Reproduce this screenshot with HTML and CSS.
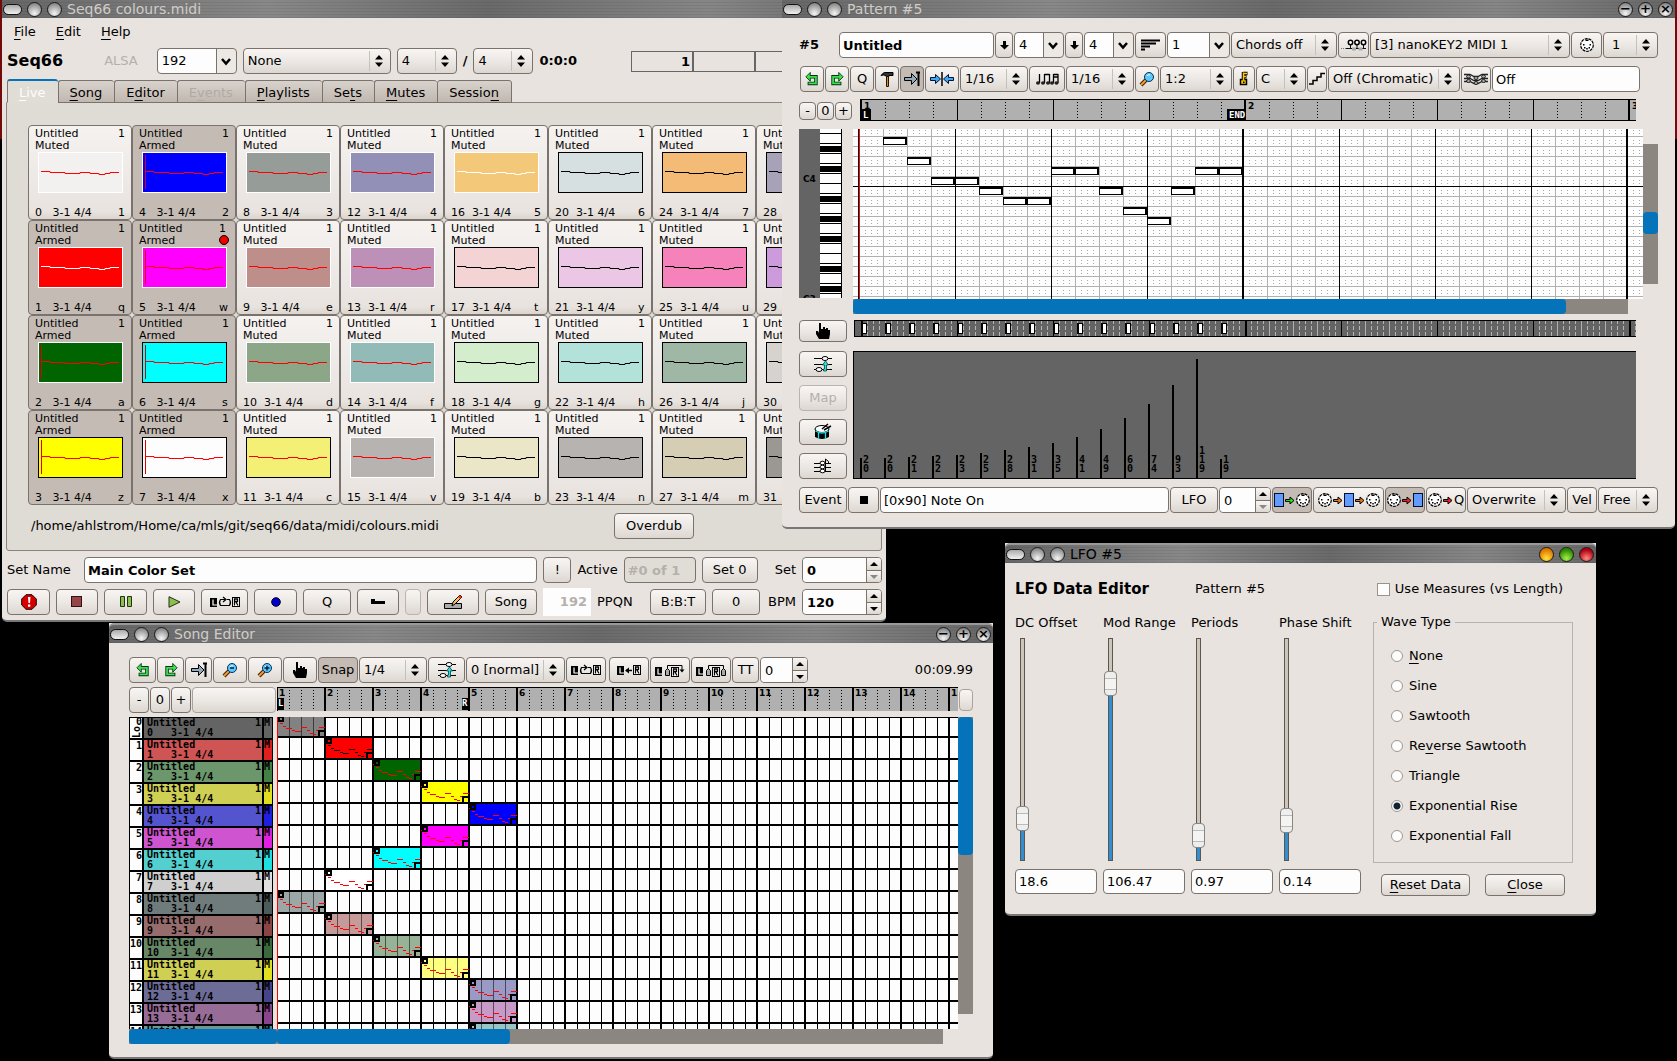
FILE: index.html
```html
<!DOCTYPE html>
<html lang="en">
<head>
<meta charset="utf-8">
<title>Seq66 colours.midi</title>
<link rel="stylesheet" href="styles.css">
</head>
<body>
<svg class="sprite" aria-hidden="true">
  <symbol id="i-undo" viewBox="0 0 16 16"><path d="M4 5.500h8.500v7.500H3" fill="none" stroke="#031" stroke-width="4"/><path d="M1 5.500l5-5v10z" fill="#3fe04f" stroke="#031"/><path d="M4 5.500h8.500v7.500H4" fill="none" stroke="#3fe04f" stroke-width="2"/></symbol>
  <symbol id="i-redo" viewBox="0 0 16 16"><path d="M12 5.500H3.500v7.500H13" fill="none" stroke="#031" stroke-width="4"/><path d="M15 5.500l-5-5v10z" fill="#3fe04f" stroke="#031"/><path d="M12 5.500H3.500v7.500H12" fill="none" stroke="#3fe04f" stroke-width="2"/></symbol>
  <symbol id="i-hammer" viewBox="0 0 16 16"><path d="M2 4.500q2-3 4-3h8v3h-4v1h-3v-1q-3-1-5 0z" fill="#333" stroke="#000"/><path d="M7.500 5.500h2v10h-2z" fill="#e08a30" stroke="#210"/></symbol>
  <symbol id="i-snap" viewBox="0 0 18 16"><path d="M1.500 6.500h7v-4l5.500 5.500-5.500 5.500v-4h-7z" fill="#8fa9bd" stroke="#000"/><path d="M13 1.500h4M15.500 1v14" fill="none" stroke="#000" stroke-width="2"/></symbol>
  <symbol id="i-squeeze" viewBox="0 0 24 16"><path d="M.5 6.500h5v-3l5 4.500-5 4.500v-3h-5zM23.500 6.500h-5v-3l-5 4.500 5 4.500v-3h5z" fill="#3fa9f5" stroke="#013" stroke-width="1"/><path d="M12 1v14" stroke="#000" stroke-width="1.500"/></symbol>
  <symbol id="i-notes" viewBox="0 0 24 14"><path d="M4.500 2v9M9.500 2v9M14.500 2v9M9.500 2.500h5M18.500 2v9M23 2v9M18.500 2.500h4.500M18.500 5h4.500" fill="none" stroke="#000" stroke-width="1.300"/><g fill="#222"><ellipse cx="3" cy="11" rx="2" ry="1.700"/><ellipse cx="8" cy="11" rx="2" ry="1.700"/><ellipse cx="13" cy="11" rx="2" ry="1.700"/><ellipse cx="17" cy="11" rx="2" ry="1.700"/><ellipse cx="21.500" cy="11" rx="2" ry="1.700"/></g></symbol>
  <symbol id="i-zoom" viewBox="0 0 16 16"><path d="M7 9l-5 5" stroke="#420" stroke-width="4"/><path d="M7 9l-5 5" stroke="#f19a38" stroke-width="2"/><circle cx="10" cy="6" r="4.500" fill="#5cc8ff" stroke="#035"/><path d="M8 5q1-2 3-1" stroke="#fff" fill="none"/></symbol>
  <symbol id="i-zoomout" viewBox="0 0 16 16"><use href="#i-zoom"/><path d="M8 6h4" stroke="#024" stroke-width="1.500"/></symbol>
  <symbol id="i-zoomin" viewBox="0 0 16 16"><use href="#i-zoom"/><path d="M7.500 6h5M10 3.500v5" stroke="#024" stroke-width="1.500"/></symbol>
  <symbol id="i-key" viewBox="0 0 10 16"><path d="M4 2.500h4.500M4 5.500h3.500M4.500 1v7.500" stroke="#000" stroke-width="3.500" fill="none"/><path d="M1.500 8.500h6v5h-6z" fill="#fc0" stroke="#000" stroke-width="1.500"/><path d="M4.500 1.500v8M4.500 2.500h3.500M4.500 5.500h2.500" stroke="#fc0" stroke-width="1.500" fill="none"/><rect x="4" y="10.500" width="1.500" height="1.500"/></symbol>
  <symbol id="i-scale" viewBox="0 0 18 14"><path d="M1 12h4v-3.500h4v-3.500h4v-3.500h4" fill="none" stroke="#000" stroke-width="1.500"/></symbol>
  <symbol id="i-chords" viewBox="0 0 24 14"><path d="M0 2.500h6l4 2h4l4-2h6M0 6.500h6l4 2h4l4-2h6M0 9.500h6l4 2h4l4-2h6" fill="none" stroke="#222" stroke-width="1.300"/><g fill="#aaa" stroke="#222"><ellipse cx="4.500" cy="4.500" rx="2" ry="1.500"/><ellipse cx="12" cy="6" rx="2" ry="1.500"/><ellipse cx="19.500" cy="4.500" rx="2" ry="1.500"/><ellipse cx="4.500" cy="9" rx="2" ry="1.500"/><ellipse cx="12" cy="11" rx="2" ry="1.500"/><ellipse cx="19.500" cy="9" rx="2" ry="1.500"/></g></symbol>
  <symbol id="i-sort" viewBox="0 0 20 12"><path d="M0 1.500h19M0 4.500h15M0 7.500h9M0 10.500h4" stroke="#000" stroke-width="2"/></symbol>
  <symbol id="i-port" viewBox="0 0 26 12"><path d="M0 9.500h6" stroke="#777" stroke-dasharray="1 1"/><path d="M5 9.500h20M9.500 5v5M16 5v5M22.500 5v5" stroke="#111"/><path d="M11 10h4M17.500 10h4" stroke="#aaa" stroke-width="3"/><g fill="#fff" stroke="#000" stroke-width="1.500"><circle cx="9.500" cy="3.500" r="2.200"/><circle cx="16" cy="3.500" r="2.200"/><circle cx="22.500" cy="3.500" r="2.200"/></g></symbol>
  <symbol id="i-din" viewBox="0 0 14 14"><circle cx="7" cy="7" r="6.300" fill="#fff" stroke="#000" stroke-dasharray="3 .8" stroke-width="1.200"/><g fill="#000"><rect x="3" y="6" width="1.500" height="1.500"/><rect x="9.500" y="6" width="1.500" height="1.500"/><rect x="4" y="9" width="1.500" height="1.500"/><rect x="8.500" y="9" width="1.500" height="1.500"/><rect x="6.250" y="10" width="1.500" height="1.500"/><rect x="5.500" y="1.500" width="3" height="1.500"/></g></symbol>
  <symbol id="i-arrow" viewBox="0 0 10 9"><path d="M.5 3.500h4.500v-2.500l4 3.500-4 3.500v-2.500h-4.500z" stroke="#000"/></symbol>
  <symbol id="i-box" viewBox="0 0 10 14"><rect x=".5" y=".5" width="9" height="13" fill="#649bff" stroke="#013"/></symbol>
  <symbol id="i-hand" viewBox="0 0 16 16"><path d="M4 0h2v6h2v-2h2v2h1v-1h2v2h2v4l-1 5h-10l-3-5v-3h2l1 2z" fill="#000"/></symbol>
  <symbol id="i-mixer" viewBox="0 0 18 16"><path d="M0 2.500h18M0 8.500h18M0 13.500h18" stroke="#000"/><ellipse cx="11" cy="2.500" rx="3" ry="2" fill="#fff" stroke="#000"/><ellipse cx="5" cy="13.500" rx="3" ry="2" fill="#fff" stroke="#000"/><path d="M11.500 5l3 4h-2v6h-3v-2h1v-4h-2z" fill="#3dd" stroke="#044" stroke-width=".8"/></symbol>
  <symbol id="i-drum" viewBox="0 0 18 18"><path d="M1 6v8q7 4 14 0v-8z" fill="#000"/><ellipse cx="8" cy="6" rx="7" ry="3.500" fill="#fff" stroke="#000"/><path d="M1.500 8q6.500 4 13 0M4.500 10v6M11.500 10v6" fill="none" stroke="#1de0e0" stroke-width="1.300"/><path d="M8 6l6-5M10 7l7-4" stroke="#000" stroke-width="1.500"/></symbol>
  <symbol id="i-score" viewBox="0 0 18 16"><path d="M0 5.500h6M11 5.500h6M0 9.500h6M11 9.500h6M0 13.500h6M11 13.500h6" stroke="#000"/><path d="M11.500 13V1l3 2.500v2" fill="none" stroke="#000"/><g fill="#fff" stroke="#000"><ellipse cx="8.500" cy="5" rx="2.500" ry="1.800"/><ellipse cx="8.500" cy="9" rx="2.500" ry="1.800"/><ellipse cx="8.500" cy="13" rx="2.500" ry="1.800"/></g></symbol>
  <symbol id="i-l" viewBox="0 0 8 9"><path d="M0 0h7v9h-7z"/><path d="M3 1.500v5.500h4" fill="none" stroke="#fff" stroke-width="1.200"/></symbol>
  <symbol id="i-r" viewBox="0 0 8 10"><rect x=".5" y=".5" width="7" height="9" fill="#fff" stroke="#000"/><path d="M2.500 8.500v-6.500h3v2.500h-3M4 5l2 3.500" fill="none" stroke="#000" stroke-width="1.300"/></symbol>
  <symbol id="i-loop" viewBox="0 0 30 12"><use href="#i-l" x="0" y="2" width="8" height="9"/><path d="M15 3.500h-4.500q-2 3 0 6h9q2-3 0-6h-2.500M13 1l3 2.500-3 2.500" fill="none" stroke="#000" stroke-width="1.200"/><use href="#i-r" x="22" y="1" width="8" height="10"/></symbol>
  <symbol id="i-lcopy" viewBox="0 0 24 12"><use href="#i-l" x="0" y="2" width="8" height="9"/><path d="M9 6.500h6" stroke="#000" stroke-width="1.500"/><path d="M8 6.500l4-3v6z"/><use href="#i-r" x="16" y="1" width="8" height="10"/></symbol>
  <symbol id="i-expand" viewBox="0 0 30 13"><use href="#i-l" x="0" y="3" width="8" height="9"/><path d="M12.500 12V1.500h14.500v5" fill="none" stroke="#000"/><path d="M24.500 5.500h5l-2.500 3z"/><path d="M10.500 11.500v-5l2-2 2 2v5z" fill="#aaa" stroke="#000"/><use href="#i-r" x="16" y="3" width="8" height="10"/></symbol>
  <symbol id="i-grow" viewBox="0 0 30 13"><use href="#i-l" x="0" y="3" width="8" height="9"/><path d="M12.500 5V1.500h15v4" fill="none" stroke="#000"/><path d="M10.500 11.500v-5l2-2 2 2v5zM25.500 11.500v-5l2-2 2 2v5z" fill="#aaa" stroke="#000"/><use href="#i-r" x="16" y="3" width="8" height="10"/></symbol>
  <symbol id="i-panic" viewBox="0 0 16 16"><path d="M5 .7h6L15.300 5v6L11 15.300H5L.7 11V5z" fill="#d40000" stroke="#200"/><path d="M7 3h2.500l-.5 6h-1.500zM7 10.500h2.300v2.300h-2.300z" fill="#fff"/></symbol>
  <symbol id="i-pencil" viewBox="0 0 20 16"><path d="M1.500 9.500h17v5h-17z" fill="#aaa" stroke="#000"/><path d="M9 12l1-4 7-7 2 2-7 7z" fill="#f7c05a" stroke="#000"/><path d="M16 2l2 2" stroke="#e33" stroke-width="2.500"/></symbol>
</svg>

<main class="desktop">

<section class="window main-window" aria-label="Seq66 colours.midi">
  <header class="titlebar"><span class="pill"></span><span class="orb"></span><span class="orb"></span><h1>Seq66 colours.midi</h1></header>
  <nav class="menubar"><a href="#file"><u>F</u>ile</a><a href="#edit"><u>E</u>dit</a><a href="#help"><u>H</u>elp</a></nav>
  <div class="row main-tools">
    <strong class="brand">Seq66</strong><span class="dim engine">ALSA</span>
    <select class="combo w80" aria-label="PPQN"><option>192</option></select>
    <select class="w148" aria-label="Mutes"><option>None</option></select>
    <select class="w60" aria-label="Beats"><option>4</option></select>
    <b>/</b>
    <select class="w60" aria-label="Beat width"><option>4</option></select>
    <b class="clock">0:0:0</b>
    <div class="beats"><span>1</span><span></span><span></span><span></span></div>
  </div>
  <div class="tabs" role="tablist">
    <button role="tab" class="tab tab-on"><u>L</u>ive</button><button role="tab" class="tab"><u>S</u>ong</button><button role="tab" class="tab">E<u>d</u>itor</button><button role="tab" class="tab" disabled>E<u>v</u>ents</button><button role="tab" class="tab"><u>P</u>laylists</button><button role="tab" class="tab">Se<u>t</u>s</button><button role="tab" class="tab"><u>M</u>utes</button><button role="tab" class="tab">Sessio<u>n</u></button>
  </div>
  <div class="pane">
    <div class="slots" id="slots"></div>
    <div class="pane-foot"><span class="path">/home/ahlstrom/Home/ca/mls/git/seq66/data/midi/colours.midi</span><button class="w80">Overdub</button></div>
  </div>
  <div class="row foot-row">
    <label for="setname" class="set-name">Set Name</label><input id="setname" class="grow bold" value="Main Color Set">
    <button class="w28">!</button><label for="active">Active</label><input id="active" class="w72 bold" value="#0 of 1" disabled>
    <button class="w56">Set 0</button><label for="setno" class="set-no">Set</label>
    <div class="spin w80"><input id="setno" class="bold" value="0"><span><button aria-label="Up" class="up"></button><button aria-label="Down" class="down off"></button></span></div>
  </div>
  <div class="row foot-row">
    <button class="w43" aria-label="Panic"><svg width="16" height="16"><use href="#i-panic"/></svg></button>
    <button class="w42" aria-label="Stop"><svg width="12" height="12"><rect x=".5" y=".5" width="10" height="10" fill="#964646" stroke="#311"/></svg></button>
    <button class="w43" aria-label="Pause"><svg width="12" height="12"><path d="M.5.5h4v10h-4zM7.500.5h4v10h-4z" fill="#8cbe50" stroke="#231"/></svg></button>
    <button class="w42" aria-label="Play"><svg width="13" height="12"><path d="M1 .7l11 5.300-11 5.300z" fill="#8cbe50" stroke="#231"/></svg></button>
    <button class="w47" aria-label="Loop"><svg width="30" height="12"><use href="#i-loop"/></svg></button>
    <button class="w43" aria-label="Record"><svg width="10" height="10"><circle cx="5" cy="5" r="4.300" fill="#0000d0" stroke="#001"/></svg></button>
    <button class="w48">Q</button>
    <button class="w42" aria-label="Keep"><svg width="14" height="8"><path d="M0 1h4v2h10v3H0z"/></svg></button>
    <button class="w16" disabled aria-label="Unused"></button>
    <button class="w52" aria-label="Edit"><svg width="20" height="16"><use href="#i-pencil"/></svg></button>
    <button class="w52">Song</button>
    <output class="ppqn">192</output><span>PPQN</span>
    <button class="w56 push">B:B:T</button><button class="w48">0</button><label for="bpm" class="bpm">BPM</label>
    <div class="spin w80"><input id="bpm" class="bold" value="120"><span><button aria-label="Up" class="up"></button><button aria-label="Down" class="down"></button></span></div>
  </div>
</section>

<section class="window pattern-window" aria-label="Pattern #5">
  <header class="titlebar"><span class="pill"></span><span class="orb"></span><span class="orb"></span><h1>Pattern #5</h1><span class="orb end">−</span><span class="orb">+</span><span class="orb">×</span></header>
  <div class="row tight p-row1">
    <label for="pname" class="w39 bold">#5</label><input id="pname" class="w155 bold" value="Untitled">
    <button class="w18" aria-label="Beats"><svg width="9" height="9"><path d="M3 0h3v4h3l-4.500 4.500L0 4h3z"/></svg></button><select class="combo w50" aria-label="Beats"><option>4</option></select>
    <button class="w18" aria-label="Width"><svg width="9" height="9"><path d="M3 0h3v4h3l-4.500 4.500L0 4h3z"/></svg></button><select class="combo w50" aria-label="Beat width"><option>4</option></select>
    <button class="w31" aria-label="Length"><svg width="20" height="12"><use href="#i-sort"/></svg></button><select class="combo w63" aria-label="Measures"><option>1</option></select>
    <select class="w106" aria-label="Chord"><option>Chords off</option></select>
    <button class="w31" aria-label="Port"><svg width="26" height="12"><use href="#i-port"/></svg></button><select class="grow" aria-label="Output port"><option>[3] nanoKEY2 MIDI 1</option></select>
    <button class="w31" aria-label="Channel"><svg width="14" height="14"><use href="#i-din"/></svg></button><select class="w55 inset" aria-label="Channel number"><option>1</option></select>
  </div>
  <div class="row tight p-row2">
    <button class="w24" aria-label="Undo"><svg width="14" height="14"><use href="#i-undo"/></svg></button><button class="w24" aria-label="Redo"><svg width="14" height="14"><use href="#i-redo"/></svg></button><button class="w24">Q</button><button class="w24" aria-label="Tools"><svg width="16" height="16"><use href="#i-hammer"/></svg></button><button class="w24 on" aria-label="Follow"><svg width="18" height="16"><use href="#i-snap"/></svg></button><button class="w34" aria-label="Snap"><svg width="24" height="16"><use href="#i-squeeze"/></svg></button><select class="w68" aria-label="Snap size"><option>1/16</option></select>
    <button class="w36" aria-label="Note length"><svg width="24" height="14"><use href="#i-notes"/></svg></button><select class="w68" aria-label="Note size"><option>1/16</option></select>
    <button class="w24" aria-label="Zoom"><svg width="16" height="16"><use href="#i-zoom"/></svg></button><select class="w72" aria-label="Zoom level"><option>1:2</option></select>
    <button class="w22" aria-label="Key"><svg width="10" height="16"><use href="#i-key"/></svg></button><select class="w50" aria-label="Key name"><option>C</option></select>
    <button class="w20" aria-label="Scale"><svg width="18" height="14"><use href="#i-scale"/></svg></button><select class="w132" aria-label="Scale name"><option>Off (Chromatic)</option></select>
    <button class="w30" aria-label="Background"><svg width="24" height="14"><use href="#i-chords"/></svg></button><input class="grow" value="Off" aria-label="Background sequence">
  </div>
  <div class="row tight p-ruler"><button class="w17 h18">-</button><button class="w17 h18">0</button><button class="w17 h18">+</button><svg class="ruler" id="ruler"></svg></div>
  <div class="p-roll"><svg class="keys" id="keys"></svg><svg class="roll" id="roll"></svg><div class="vbar"><i></i></div></div>
  <div class="hbar p-hbar"><i></i></div>
  <div class="p-events"><button class="w48 h22" aria-label="Grab"><svg width="16" height="16"><use href="#i-hand"/></svg></button><svg class="events" id="events"></svg></div>
  <div class="p-data">
    <div class="p-side"><button aria-label="Levels"><svg width="18" height="16"><use href="#i-mixer"/></svg></button><button disabled>Map</button><button aria-label="Drums"><svg width="18" height="18"><use href="#i-drum"/></svg></button><button aria-label="Notes"><svg width="18" height="16"><use href="#i-score"/></svg></button></div>
    <svg class="data" id="data"></svg>
  </div>
  <div class="row tight p-foot">
    <button class="w48">Event</button><button class="w31" aria-label="Event kind"><svg width="8" height="8"><rect width="8" height="8"/></svg></button><input class="grow" value="[0x90] Note On" aria-label="Event name"><button class="w48">LFO</button>
    <div class="spin w52"><input value="0" aria-label="Value"><span><button aria-label="Up" class="up"></button><button aria-label="Down" class="down off"></button></span></div>
    <button class="w40 on icons" aria-label="Play"><svg width="10" height="14"><use href="#i-box"/></svg><svg width="10" height="9" fill="#1de61d"><use href="#i-arrow"/></svg><svg width="14" height="14"><use href="#i-din"/></svg></button>
    <button class="w71 icons" aria-label="Thru"><svg width="14" height="14"><use href="#i-din"/></svg><svg width="10" height="9" fill="#e07818"><use href="#i-arrow"/></svg><svg width="10" height="14"><use href="#i-box"/></svg><svg width="10" height="9" fill="#e07818"><use href="#i-arrow"/></svg><svg width="14" height="14"><use href="#i-din"/></svg></button>
    <button class="w40 on icons" aria-label="Record"><svg width="14" height="14"><use href="#i-din"/></svg><svg width="10" height="9" fill="#f02020"><use href="#i-arrow"/></svg><svg width="10" height="14"><use href="#i-box"/></svg></button>
    <button class="w40 icons"><svg width="14" height="14"><use href="#i-din"/></svg><svg width="10" height="9" fill="#f02020"><use href="#i-arrow"/></svg>Q</button>
    <select class="w99" aria-label="Record style"><option>Overwrite</option></select><button class="w30">Vel</button><select class="w60" aria-label="Velocity"><option>Free</option></select>
  </div>
</section>

<section class="window song-window" aria-label="Song Editor">
  <header class="titlebar"><span class="pill"></span><span class="orb"></span><span class="orb"></span><h1>Song Editor</h1><span class="orb end">−</span><span class="orb">+</span><span class="orb">×</span></header>
  <div class="row tight s-tools">
    <button class="w27" aria-label="Undo"><svg width="14" height="14"><use href="#i-undo"/></svg></button><button class="w27" aria-label="Redo"><svg width="14" height="14"><use href="#i-redo"/></svg></button><button class="w27" aria-label="Follow"><svg width="18" height="16"><use href="#i-snap"/></svg></button><button class="w34" aria-label="Zoom out"><svg width="16" height="16"><use href="#i-zoomout"/></svg></button><button class="w34" aria-label="Zoom in"><svg width="16" height="16"><use href="#i-zoomin"/></svg></button><button class="w34" aria-label="Grab"><svg width="16" height="16"><use href="#i-hand"/></svg></button><button class="w40 on">Snap</button><select class="w68" aria-label="Snap size"><option>1/4</option></select><button class="w37" aria-label="Transpose"><svg width="18" height="16"><use href="#i-mixer"/></svg></button><select class="w99" aria-label="Transposition"><option>0 [normal]</option></select><button class="w40" aria-label="Loop"><svg width="30" height="12"><use href="#i-loop"/></svg></button><button class="w40 gap-l" aria-label="Collapse"><svg width="24" height="12"><use href="#i-lcopy"/></svg></button><button class="w40" aria-label="Expand"><svg width="30" height="13"><use href="#i-expand"/></svg></button><button class="w40" aria-label="Grow"><svg width="30" height="13"><use href="#i-grow"/></svg></button><button class="w27">TT</button>
    <div class="spin w48"><input value="0" aria-label="Trigger transpose"><span><button aria-label="Up" class="up"></button><button aria-label="Down" class="down"></button></span></div>
    <time class="push">00:09.99</time>
  </div>
  <div class="s-head"><button class="w20">-</button><button class="w20">0</button><button class="w20">+</button><button class="faint" aria-label="Blank"></button><svg class="s-ruler" id="sruler"></svg><button class="faint w14 h22" aria-label="Corner"></button></div>
  <div class="s-body"><div class="tracks" id="tracks"></div><svg class="s-grid" id="sgrid"></svg><div class="vbar"><i></i></div></div>
  <div class="s-bars"><div class="hbar left"><i></i></div><div class="hbar right"><i></i></div></div>
</section>

<section class="window lfo-window" aria-label="LFO #5">
  <header class="titlebar active"><span class="pill"></span><span class="orb"></span><span class="orb"></span><h1>LFO #5</h1><span class="orb end amber"></span><span class="orb green"></span><span class="orb red"></span></header>
  <div class="lfo-head"><h2>LFO Data Editor</h2><span>Pattern #5</span><label class="check"><input type="checkbox">Use Measures (vs Length)</label></div>
  <div class="lfo-body">
    <div class="sliders">
      <div><label for="dc">DC Offset</label><input id="dc" type="range" min="0" max="100" step="any" value="14.600" style="--v:14.6"><input value="18.6" aria-label="DC Offset value"></div>
      <div><label for="mod">Mod Range</label><input id="mod" type="range" min="0" max="100" step="any" value="83.800" style="--v:83.8"><input value="106.47" aria-label="Mod Range value"></div>
      <div><label for="per">Periods</label><input id="per" type="range" min="0" max="100" step="any" value="6" style="--v:6"><input value="0.97" aria-label="Periods value"></div>
      <div><label for="pha">Phase Shift</label><input id="pha" type="range" min="0" max="100" step="any" value="14" style="--v:14"><input value="0.14" aria-label="Phase Shift value"></div>
    </div>
    <div class="wave">
      <fieldset><legend>Wave Type</legend>
        <label><input type="radio" name="w"><span><u>N</u>one</span></label><label><input type="radio" name="w">Sine</label><label><input type="radio" name="w">Sawtooth</label><label><input type="radio" name="w"><span>Re<u>v</u>erse Sawtooth</span></label><label><input type="radio" name="w">Triangle</label><label><input type="radio" name="w" checked>Exponential Rise</label><label><input type="radio" name="w">Exponential Fall</label>
      </fieldset>
      <div class="wave-foot"><button><span><u>R</u>eset Data</span></button><button class="w80"><span><u>C</u>lose</span></button></div>
    </div>
  </div>
</section>
</main>
<script src="app.js"></script>
</body>
</html>
```
FILE: styles.css
```css
* { box-sizing: border-box; }
body { margin: 0; background: #000; color: #000; font: 13px/16px "DejaVu Sans", sans-serif; }
.desktop { position: relative; min-height: 100vh; overflow: hidden; border: solid #720a0a; border-width: 0 2px; border-image: linear-gradient(#720a0a 0 140px, #000 140px) 1; }
.sprite { position: absolute; width: 0; height: 0; }
button, input, select, output { font: inherit; color: inherit; margin: 0; }
svg { display: block; flex: none; }
h1, h2 { margin: 0; font-weight: 400; }
u { text-underline-offset: 3px; text-decoration-thickness: 1px; }
.bold { font-weight: 700; }
.dim { color: #b4b0ac; }
.grow { flex: 1; min-width: 0; }
.push { margin-left: auto; }

/* windows */
.window { position: absolute; display: flex; flex-direction: column; background: #e8e3df; border-bottom: 2px solid #777; border-radius: 0 0 5px 5px; }
.main-window { left: 0; top: 0; width: 884px; }
.pattern-window { left: 780px; top: 0; width: 893px; }
.song-window { left: 107px; top: 623px; width: 884px; }
.lfo-window { left: 1003px; top: 543px; width: 591px; }
.titlebar { display: flex; align-items: center; gap: 5px; height: 18px; padding: 0 2px 0 1px; background: repeating-linear-gradient(#0000 0 2px, #0001 2px 3px), linear-gradient(90deg, #666, #888 30%, #6a6a6a 55%, #868686 80%, #666); color: #cfccc8; }
.song-window .titlebar, .lfo-window .titlebar { height: 20px; border-top: 2px solid #999; border-radius: 5px 5px 0 0; }
.titlebar h1 { font-size: 14px; line-height: 18px; }
.titlebar.active { color: #000; }
.pill { width: 19px; height: 11px; border: 1px solid #111; border-radius: 6px; background: linear-gradient(#aaa, #f0f0f0); }
.orb { width: 15px; height: 15px; border: 1px solid #1a1a1a; border-radius: 50%; background: radial-gradient(circle at 50% 80%, #f4f4f4, #888 80%); color: #000; font: 700 13px/12px "DejaVu Sans", sans-serif; text-align: center; }
.orb.end { margin-left: auto; }
.orb.amber { background: radial-gradient(circle at 50% 80%, #ffe33a, #e07800 70%); }
.orb.green { background: radial-gradient(circle at 50% 80%, #a6f04c, #2c8a00 70%); }
.orb.red { background: radial-gradient(circle at 50% 80%, #ff8a80, #b00010 70%); }

/* controls */
button, select, input, .spin { height: 26px; border: 1px solid #7a726c; border-radius: 4px; }
button { display: inline-flex; flex: none; align-items: center; justify-content: center; padding: 0; background: linear-gradient(#f8f5f3, #ece8e4 50%, #ddd7d1); }
button.on { background: #c4bcb4; }
button:disabled { color: #b4b0ac; border-color: #bab4ae; }
button.faint { border-color: #aaa39c; }
button.icons { gap: 1px; }
select { flex: none; appearance: none; padding: 0 0 0 4px; background: url("data:image/svg+xml,%3Csvg xmlns='http://www.w3.org/2000/svg' width='20' height='20'%3E%3Cpath d='M.5 0v20' stroke='%23c6c0ba'/%3E%3Cpath d='M6 8.500l4-4.500 4 4.500zM6 11.500l4 4.500 4-4.500z'/%3E%3C/svg%3E") right 1px center no-repeat, linear-gradient(#f8f5f3, #ece8e4 50%, #ddd7d1); }
select.combo { background: url("data:image/svg+xml,%3Csvg xmlns='http://www.w3.org/2000/svg' width='20' height='24'%3E%3Crect width='20' height='24' fill='%23ece8e4'/%3E%3Cpath d='M.5 0v24' stroke='%237a726c'/%3E%3Cpath d='M6 10l4 4.500 4-4.500' fill='none' stroke='%23000' stroke-width='2.500'/%3E%3C/svg%3E") right center no-repeat, #fdfdfd; }
select.grow { flex: 1; }
select.inset { padding-left: 8px; }
input { padding: 0 0 0 3px; background: #fdfdfd; }
input:disabled { background: #e0dcd6; color: #b4b0ac; }
.spin { display: flex; flex: none; background: #fdfdfd; overflow: hidden; }
.spin input { flex: 1; min-width: 0; height: 24px; border: 0; padding-left: 4px; }
.spin span { display: grid; grid-template-rows: 1fr 1fr; width: 15px; border-left: 1px solid #7a726c; }
.spin button { height: auto; border: 0; border-radius: 0; }
.spin .down { border-top: 1px solid #7a726c; }
.spin button::before { content: ""; border: solid transparent; border-width: 0 4px 4px; border-bottom-color: #000; }
.spin .down::before { border-width: 4px 4px 0; border-top-color: #000; }
.spin .off::before { border-top-color: #888; }
.w14 { width: 14px; } .w16 { width: 16px; } .w17 { width: 17px; } .w18 { width: 18px; } .w20 { width: 20px; }
.w22 { width: 22px; } .w24 { width: 24px; } .w27 { width: 27px; } .w28 { width: 28px; } .w30 { width: 30px; }
.w31 { width: 31px; } .w34 { width: 34px; } .w36 { width: 36px; } .w37 { width: 37px; } .w39 { width: 39px; }
.w40 { width: 40px; } .w42 { width: 42px; } .w43 { width: 43px; } .w47 { width: 47px; } .w48 { width: 48px; }
.w50 { width: 50px; } .w52 { width: 52px; } .w55 { width: 55px; } .w56 { width: 56px; } .w60 { width: 60px; }
.w63 { width: 63px; } .w68 { width: 68px; } .w71 { width: 71px; } .w72 { width: 72px; } .w80 { width: 80px; }
.w99 { width: 99px; } .w106 { width: 106px; } .w132 { width: 132px; } .w148 { width: 148px; } .w155 { width: 155px; }
.h18 { height: 18px; } .h22 { height: 22px; }
.row { display: flex; align-items: center; gap: 6px; }
.row.tight { gap: 1px; }
.vbar, .hbar { background: #8b8680; }
.vbar i, .hbar i { display: block; background: #0473b9; border-radius: 4px; }
.vbar { width: 15px; }
.hbar, .hbar i { height: 15px; }

/* main window */
.main-window { padding-bottom: 5px; }
.menubar { display: flex; gap: 20px; padding: 6px 12px 4px; }
.menubar a { color: inherit; text-decoration: none; }
.main-tools { padding: 4px 5px 0; }
.brand { font-size: 16px; width: 92px; }
.engine { width: 47px; }
.beats { display: flex; height: 21px; margin-left: 48px; border: 1px solid #666; }
.beats span { width: 62px; border-right: 2px solid #666; text-align: right; padding-right: 2px; font-weight: 700; line-height: 19px; }
.beats span:last-child { border: 0; }
.tabs { display: flex; align-items: flex-end; margin: 5px 4px 0; padding-left: 1px; position: relative; }
.tab { height: 23px; padding: 2px 12px 0 11px; border: 1px solid #7a726c; border-width: 1px 0 1px 1px; border-radius: 3px 3px 0 0; background: linear-gradient(#d8d2cc, #c0b8b0); }
.tab:last-child { border-right-width: 1px; }
.tab:disabled { border-color: #7a726c; color: #b0aaa4; }
.tab-on { height: 24px; border-top: 2px solid #0473b9; border-bottom-color: #e0dcd6; background: #e0dcd6; color: #fdfdfd; }
.pane { margin: -1px 4px 0; padding: 22px 21px 11px; background: #dfdbd5; border: 1px solid #8a847f; border-radius: 0 0 3px 3px; }
.slots { display: grid; grid-template-columns: repeat(8, 104px); grid-auto-rows: 95px; }
.slot { display: grid; grid-template: 12px 12px 43px 1fr / 1fr auto; align-items: stretch; justify-content: stretch; width: 104px; height: 95px; padding: 2px 6px 0 6px; text-align: left; font-size: 11px; line-height: 12px; background: linear-gradient(#f5f2f0, #e8e3df 92%, #dcd5ce); white-space: pre; }
.slot.armed { background: #c4bcb4; }
.slot svg { grid-column: 1 / 3; width: 85px; height: 41px; margin-left: 3px; }
.slot span:nth-of-type(n+4) { align-self: end; }
.slot .dot { justify-self: end; width: 10px; height: 10px; border: 1px solid #000; border-radius: 5px; background: #e00; }
.pane-foot { display: flex; align-items: center; padding: 8px 166px 0 3px; justify-content: space-between; }
.foot-row { padding: 6px 4px 0 5px; }
.set-name { width: 71px; }
.set-no { margin-left: 11px; }
.bpm { margin-left: 2px; }
.ppqn { width: 48px; height: 28px; margin: -1px 0; padding: 6px 4px; background: #fdfdfd; color: #b4b0ac; font-weight: 700; text-align: right; }

/* pattern window */
.p-row1 { padding: 14px 17px 0; }
.p-row2 { padding: 8px 35px 0 18px; }
.p-ruler { padding: 7px 39px 0 17px; }
.p-ruler button { margin-top: 2px; }
.ruler { flex: 1; height: 22px; margin-left: 7px; background: #b0b0b0; }
.p-roll { display: flex; padding: 8px 17px 0; }
.keys { width: 43px; height: 169px; }
.roll { flex: 1; height: 170px; margin-left: 11px; background: #fdfdfd; }
.p-roll .vbar { margin: 15px 0; padding-top: 68px; }
.p-roll .vbar i { height: 22px; }
.p-hbar { margin: 0 47px 0 71px; }
.p-hbar i { width: 92%; }
.p-events { display: flex; padding: 6px 39px 0 17px; }
.events { flex: 1; height: 17px; margin-left: 7px; background: #646464; }
.p-data { display: flex; gap: 6px; padding: 9px 39px 0 17px; }
.p-side { display: grid; gap: 8px; align-content: start; width: 48px; }
.data { flex: 1; height: 128px; background: #646464; }
.p-foot { padding: 8px 17px 14px; }
text { font: 700 10px "DejaVu Sans Mono", monospace; }
text.mark { font-size: 9px; fill: #fff; }
text.num { font-family: "DejaVu Sans", sans-serif; font-size: 9px; }

/* song window */
.song-window { padding-bottom: 13px; }
.s-tools { padding: 14px 20px 0; }
.gap-l { margin-left: 2px; }
.s-head { display: grid; grid-template-columns: 20px 20px 20px 84px 1fr 14px; gap: 1px; padding: 4px 20px 0; }
.s-head button { height: 26px; }
.s-head .h22 { height: 22px; margin-top: 2px; }
.s-ruler { width: 100%; height: 24px; background: #b0b0b0; }
.s-body { display: flex; height: 312px; margin-top: 4px; padding: 0 20px; }
.tracks { width: 144px; height: 312px; margin-right: 4px; padding: 1px; background: #000; overflow: hidden; font: 700 10px/10px "DejaVu Sans Mono", monospace; white-space: pre; }
.track { display: grid; grid-template-columns: 12px 1fr 8px; gap: 0 2px; height: 22px; }
.track > * { height: 20px; }
.track .n { display: flex; justify-content: flex-end; padding-top: 1px; background: #fdfdfd; }
.track .n.first { flex-direction: column; align-items: flex-end; padding: 0; line-height: 8px; }
.track .n i { writing-mode: sideways-lr; font-style: normal; line-height: 11px; }
.track .name { display: flex; justify-content: space-between; padding: 0 1px 0 3px; }
.s-grid { flex: 1; height: 312px; background: #fdfdfd; }
.s-body .vbar { height: 297px; }
.s-body .vbar i { height: 138px; }
.s-bars { display: flex; padding: 0 50px 0 20px; }
.s-bars .left { width: 148px; }
.s-bars .right { flex: 1; }
.s-bars .right i { width: 35%; }

/* LFO window */
.lfo-window { padding-bottom: 10px; }
.lfo-head { display: flex; align-items: center; height: 26px; margin: 13px 10px 0; }
.lfo-head h2 { width: 180px; font-size: 15px; font-weight: 700; }
.check { display: flex; align-items: center; gap: 5px; margin-left: auto; padding-right: 23px; }
.check input { appearance: none; width: 13px; height: 13px; border: 1px solid #9a938c; border-radius: 0; padding: 0; }
.lfo-body { display: flex; justify-content: space-between; padding: 12px 23px 8px 10px; }
.sliders { display: grid; grid-template-columns: repeat(4, 82px); gap: 6px; }
.sliders > div { display: flex; flex-direction: column; align-items: flex-start; white-space: nowrap; }
.sliders label { height: 24px; line-height: 18px; }
.sliders input { width: 82px; height: 25px; margin-top: 8px; }
.sliders input[type=range] { appearance: none; writing-mode: vertical-lr; direction: rtl; width: 13px; height: 223px; margin: 0 0 0 1px; padding: 0; border: 0; background: none; }
input[type=range]::-webkit-slider-runnable-track { width: 5px; height: 223px; border: 1px solid #5d564f; background: linear-gradient(to top, #2f8fd2 calc(var(--v) * 2px + 11px), #cdc5bc 0); }
input[type=range]::-webkit-slider-thumb { appearance: none; width: 13px; height: 25px; margin-left: -5px; border: 1px solid #8a847f; border-radius: 4px; background: linear-gradient(#eee 6px, #bbb 6px 7px, #f4f4f2 7px 17px, #bbb 17px 18px, #eee 18px); }
.wave { width: 200px; }
fieldset { margin: 0; padding: 11px 17px; border: 1px solid #b8b2ac; }
legend { margin-left: -14px; padding: 0 4px; }
fieldset label { display: flex; align-items: center; gap: 6px; height: 30px; }
input[type=radio] { appearance: none; width: 12px; height: 12px; padding: 0; border: 1px solid #a09890; border-radius: 50%; }
input[type=radio]:checked { background: radial-gradient(#123 0 3px, #fdfdfd 4px); }
.wave-foot { display: flex; gap: 15px; padding: 11px 8px 0; }
.wave-foot button { height: 22px; }
.wave-foot button:first-child { width: 89px; }
```
FILE: app.js
```javascript
const $ = id => document.getElementById(id);
const rect = (x, y, w, h, fill) => `<rect x="${x}" y="${y}" width="${w}" height="${h}" fill="${fill}" shape-rendering="crispEdges"/>`;
const box = (x, y, w, h, fill, stroke) => `<rect x="${x + .5}" y="${y + .5}" width="${w - 1}" height="${h - 1}" fill="${fill}" stroke="${stroke}"/>`;

/* pattern slots: fill, border, line */
const W = '#fff', K = '#000', R = '#f00';
const slots = [
  ['#f2f1ef', W, R], ['#ff0000', W, W], ['#006400', W, R], ['#ffff00', K, R],
  ['#0000ff', W, R], ['#ff00ff', W, R], ['#00ffff', K, R], ['#fdfdfd', K, R],
  ['#969c97', W, R], ['#be8f8a', W, R], ['#8ca787', W, R], ['#f3f075', K, R],
  ['#9290b6', W, R], ['#bd90b7', W, R], ['#92bab7', W, R], ['#b6b3b0', W, R],
  ['#f3c878', W, W], ['#f4d3d5', K, K], ['#d4eecd', K, K], ['#ece6c8', K, K],
  ['#d6e0e0', K, K], ['#ebc6e5', K, K], ['#b3e2da', K, K], ['#b6b3b0', K, K],
  ['#f4bb76', K, K], ['#f582ba', K, K], ['#9fb8a5', K, K], ['#d5ceb5', K, K],
  ['#a7a2b8', K, K], ['#cb9bdb', K, K], ['#d6d2ce', K, K], ['#9b9793', K, K]
];
const keysOf = ['1234567', 'qwertyu', 'asdfghj', 'zxcvbnm'];
let html = '';
for (let r = 0; r < 4; r++) for (let c = 0; c < 8; c++) {
  const n = c * 4 + r, [fill, edge, line] = slots[n];
  const armed = (n > 0 && n < 8);
  const head = armed && n !== 1 ? '<path d="M3.500 3v34" stroke="#d00"/>' : '';
  html += `<button class="slot${armed ? ' armed' : ''}"><span>Untitled</span><span>1</span><span>${armed ? 'Armed' : 'Muted'}</span>`
    + (n === 5 ? '<i class="dot"></i>' : '<i></i>')
    + `<svg>${box(0, 0, 85, 41, fill, edge)}${head}<path d="M3 19.500h9v1h15v1h15v-1h10v1h9v1h6v-1h5v-1h9" fill="none" stroke="${line}"/></svg>`
    + `<span>${n}${n < 10 ? '   ' : '  '}3-1 4/4</span><span>${keysOf[r][c] || ''}</span></button>`;
}
$('slots').innerHTML = html;

/* pattern ruler */
let s = rect(0, 0, 2000, 1, K) + rect(0, 21, 2000, 1, K);
for (let i = 0; i < 80; i++) {
  const x = i * 24 + 1;
  if (i % 16 === 0) s += rect(x - 1, 0, 2, 22, K) + (i < 48 ? `<text class="num" x="${x + 3}" y="10">${i / 16 + 1}</text>` : '');
  else if (i % 4 === 0) s += rect(x, 0, 1, 22, K);
  else s += `<path d="M${x + .5} 3v16" stroke="#000" stroke-dasharray="1 2"/>`;
}
s += rect(1, 10, 10, 11, K) + '<text class="mark" x="3" y="19">L</text><path d="M0 13v6l-3-3z" fill="red"/>';
s += rect(367, 10, 19, 11, K) + '<text class="mark" x="369" y="19">END</text>';
$('ruler').innerHTML = s;

/* keyboard */
s = rect(0, 0, 21, 169, '#646464') + rect(21, 0, 22, 169, '#fdfdfd') + rect(42, 0, 1, 169, K);
for (let y = 4; y < 169; y += 10) s += rect(21, y, 22, 1, K);
for (const y of [17, 37, 67, 87, 107, 137, 157]) s += rect(21, y, 21, 6, K);
s += '<text class="num" x="4" y="53">C4</text><text class="num" x="4" y="173">C3</text>';
$('keys').innerHTML = s;

/* piano roll */
const pitch = [null, 137, 157, 177, 177, 187, 197, 197, 167, 167, 187, 207, 217, 187, 167, 167];
s = '';
for (let x = 0; x < 2000; x += 6) if (x % 24) s += `<path d="M${x + 6.5} 1v170" stroke="#a8a8a8" stroke-dasharray="1 2 1 2 1 3"/>`;
for (let y = 7; y < 170; y += 10) s += rect(0, y, 2000, 1, '#b0b0b0');
for (let i = 0; i < 80; i++) {
  const x = 6 + i * 24;
  s += i % 16 === 0 ? rect(x - 1, 0, 2, 170, K) : i % 4 === 0 ? rect(x, 0, 1, 170, K) : rect(x, 0, 1, 170, '#b0b0b0');
}
s += rect(0, 57, 2000, 1, K) + rect(6, 0, 1, 170, R);
pitch.forEach((p, i) => { if (p) s += rect(6 + i * 24, p - 129, 24, 8, K) + rect(7 + i * 24, p - 127, 21, 5, '#fff'); });
$('roll').innerHTML = s;

/* event strip and velocity bars */
s = '';
for (let x = 7; x < 2000; x += 6) s += (x - 7) % 24 ? `<path d="M${x + .5} 0v17" stroke="#b4b4b4" stroke-dasharray="4 2"/>` : rect(x, 0, 1, 17, '#b0b0b0');
for (let i = 0; i < 20; i++) s += rect(7 + i * 96, 0, i % 4 ? 1 : 2, 17, K);
for (let i = 0; i < 16; i++) s += rect(7 + i * 24, 3, 6, 11, K) + rect(9 + i * 24, 4, 3, 9, W);
s += rect(0, 0, 2000, 1, K) + rect(0, 16, 2000, 1, K) + rect(0, 0, 1, 17, K);
$('events').innerHTML = s;

const vel = [20, 20, 21, 22, 23, 25, 28, 31, 35, 41, 49, 60, 74, 93, 119, 19];
const tops = [458, 458, 457, 456, 455, 453, 450, 447, 443, 437, 429, 418, 404, 385, 359, 459];
s = rect(0, 0, 2000, 1, K) + rect(0, 127, 2000, 1, K) + rect(0, 0, 1, 128, K);
vel.forEach((v, i) => {
  const x = 7 + i * 24, t = tops[i] - 351, d = String(v);
  s += rect(x, t, 2, 127 - t, K);
  [...d].forEach((ch, j) => s += `<text x="${x + 3}" y="${121 - (d.length - 1 - j) * 9}">${ch}</text>`);
});
$('data').innerHTML = s;

/* song ruler */
s = rect(0, 0, 2000, 1, K);
for (let i = 0; i < 160; i++) {
  const x = i * 12;
  if (i % 4) s += `<path d="M${x + .5} 3v19" stroke="#000" stroke-dasharray="1 2"/>`;
  else s += rect(x - 1, 0, 2, 24, K) + (i < 60 ? `<text class="num" x="${x + 2}" y="9">${i / 4 + 1}</text>` : '');
}
s += rect(1, 11, 6, 12, K) + '<text class="mark" x="1" y="19">L</text>' + rect(185, 11, 6, 12, K) + '<text class="mark" x="185" y="19">R</text>';
$('sruler').innerHTML = s;

/* tracks: name colour, mute colour, clip colour, bar */
const tracks = [
  ['#646464', '#646464', '#828282', 0], ['#cf5454', '#e01f1f', '#ff0000', 1], ['#6c966c', '#448044', '#006400', 2],
  ['#cfcf54', '#e0e01f', '#ffff00', 3], ['#5454cf', '#1f1fe0', '#0000ff', 4], ['#cf54cf', '#e01fe0', '#ff00ff', 3],
  ['#54cfcf', '#1fe0e0', '#00ffff', 2], ['#cfcfcf', '#e0e0e0', '#ffffff', 1], ['#707c7c', '#4c5c5c', '#9ca8a8', 0],
  ['#976c6c', '#8b4444', '#c79a9a', 1], ['#678767', '#3c693c', '#97b397', 2], ['#cfcf54', '#e0e01f', '#ffff80', 3],
  ['#6c6c97', '#44448b', '#9a9ac6', 4], ['#976c97', '#8b448b', '#c79ac7', 4], ['#6c9797', '#448b8b', '#98c6c6', 4]
];
$('tracks').innerHTML = tracks.map(([name, mute], i) =>
  `<div class="track"><span class="n${i === 0 ? ' first' : ''}">${i}${i === 0 ? '<i>Lo</i>' : ''}</span><span class="name" style="background:${name}"><span>Untitled\n${String(i).padEnd(4)}3-1 4/4</span><span>1</span></span><span style="background:${mute}">M</span></div>`).join('');

s = rect(0, 0, 2000, 1, K);
for (let i = 0; i < 15; i++) s += rect(0, 19 + i * 22, 2000, 2, K);
for (let i = 0; i < 160; i++) if (i % 4) s += rect(i * 12, 0, 1, 312, K);
for (let i = 0; i < 40; i++) s += rect(i * 48 - 1, 0, 2, 312, K);
tracks.forEach(([, , fill, bar], i) => {
  const x = bar * 48, y = i * 22 - 1, line = i === 1 ? K : R;
  s += rect(x + 1, y, 46, 20, fill);
  if (i === 0 || i > 7) for (let q = 1; q < 4; q++) s += rect(x + q * 12, y, 1, 20, '#0008');
  pitch.forEach((p, j) => s += rect(x + j * 3, y + Math.round(11 + ((p || 117) - 167) * .14), 3, 1, line));
  s += `<rect x="${x + 2}" y="${y + 1}" width="4" height="4" fill="${fill}" stroke="#000" stroke-width="2"/><path d="M${x + 42} ${y + 20}v-5h5" fill="none" stroke="#000" stroke-width="2"/>`;
});
s += rect(0, 0, 1, 312, R);
$('sgrid').innerHTML = s;
```
